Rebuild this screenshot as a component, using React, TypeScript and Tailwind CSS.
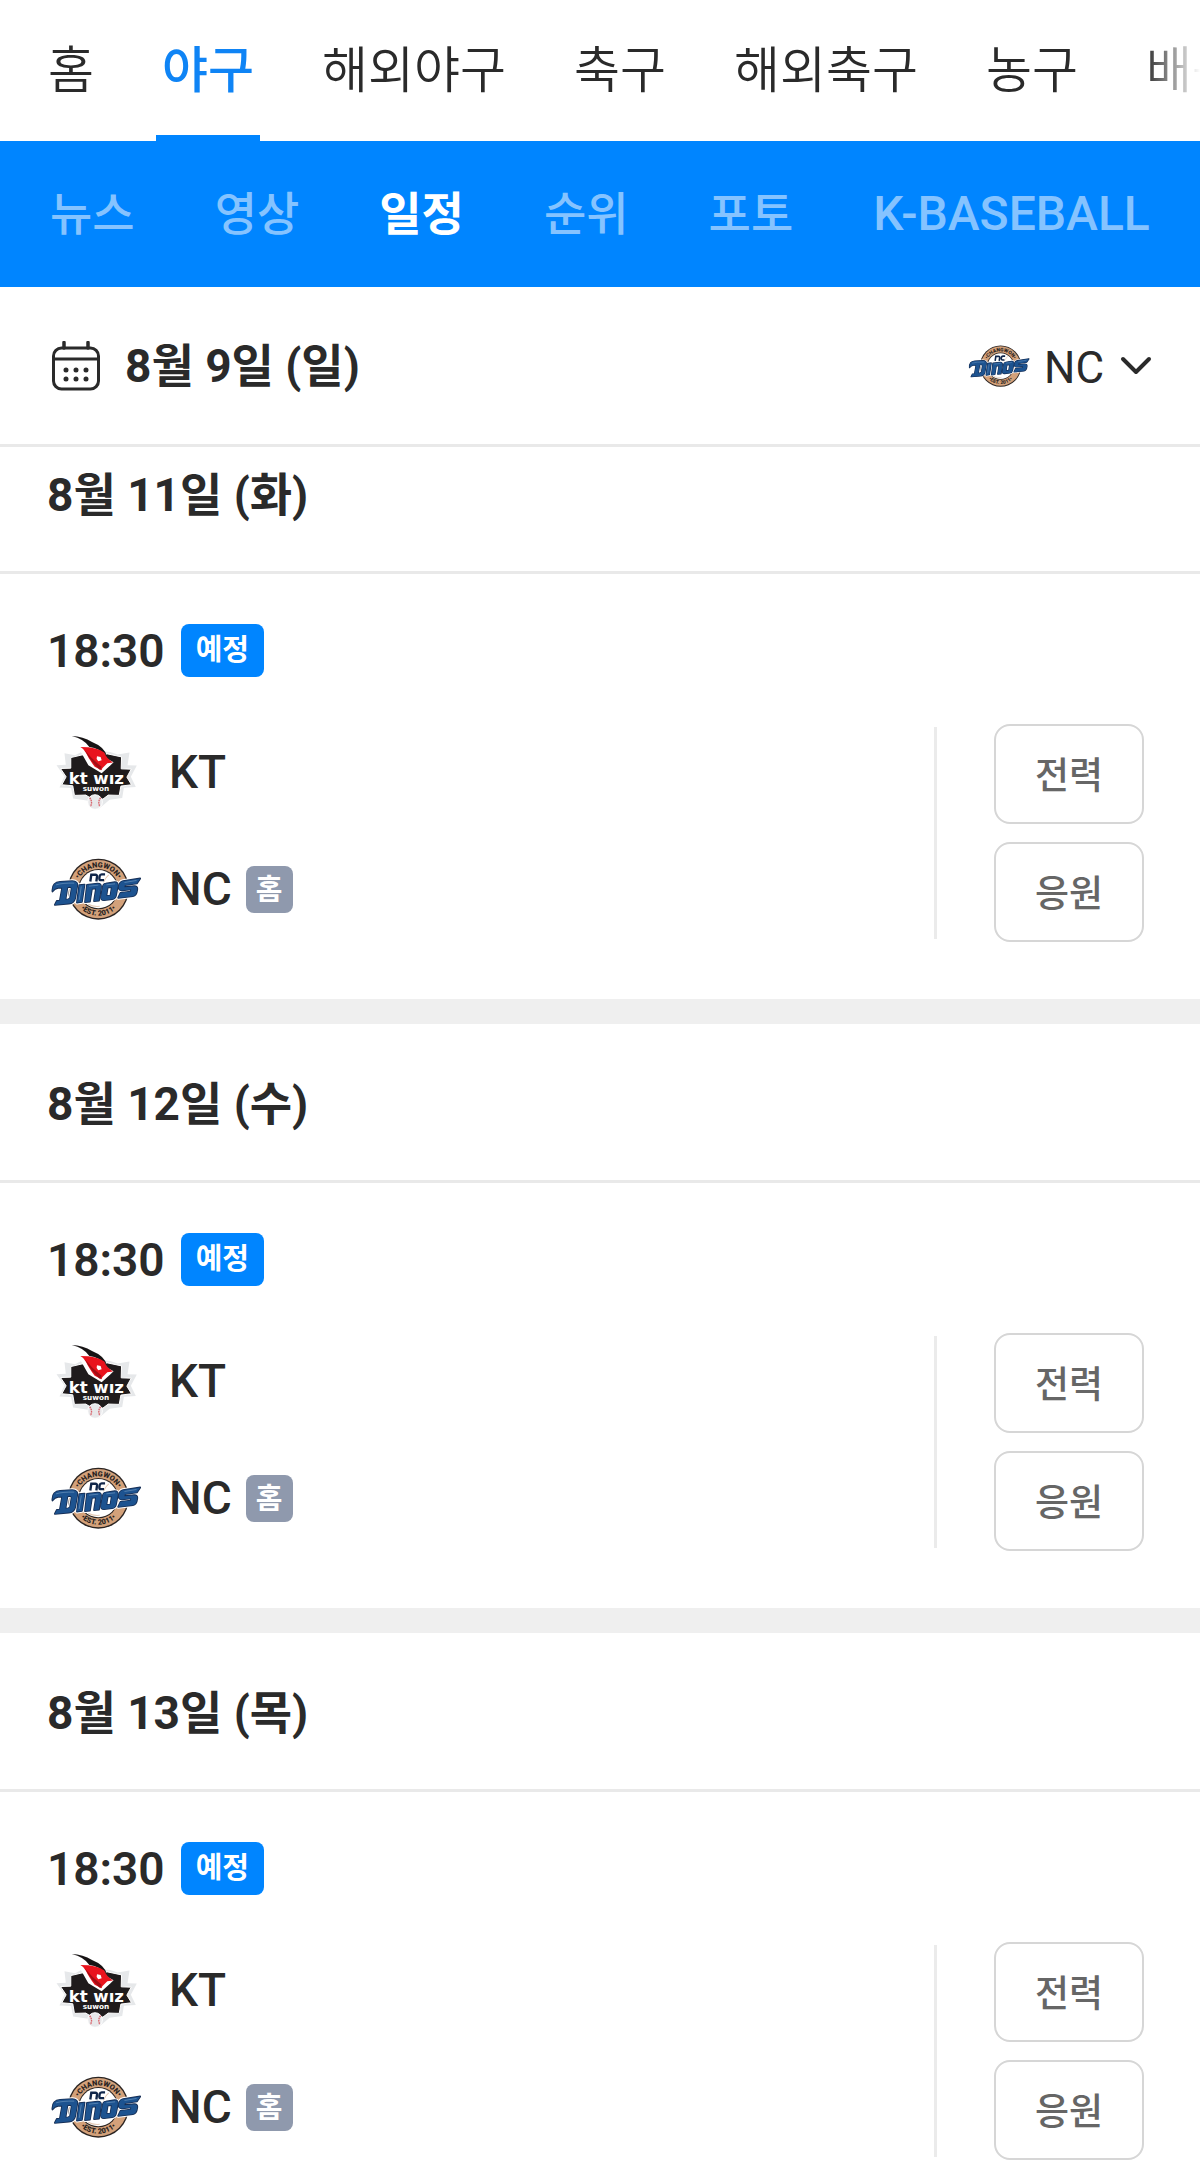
import { useState } from "react";

type Game = {
  id: string;
  date: string;
  time: string;
  status: string;
  away: string;
  home: string;
};

const SPORTS = ["홈", "야구", "해외야구", "축구", "해외축구", "농구", "배구"];
const MENUS = [
  { name: "뉴스", size: "text-[46px]" },
  { name: "영상", size: "text-[46px]" },
  { name: "일정", size: "text-[46px]" },
  { name: "순위", size: "text-[46px]" },
  { name: "포토", size: "text-[46px]" },
  { name: "K-BASEBALL", size: "text-[48px]" },
];
const TEAMS = ["NC", "KT"];

const GAMES: Game[] = [
  { id: "0811", date: "8월 11일 (화)", time: "18:30", status: "예정", away: "KT", home: "NC" },
  { id: "0812", date: "8월 12일 (수)", time: "18:30", status: "예정", away: "KT", home: "NC" },
  { id: "0813", date: "8월 13일 (목)", time: "18:30", status: "예정", away: "KT", home: "NC" },
];

// letter shapes of the slanted wordmark
const WORDMARK = [
  "M39 140Q37 113 62 111L98 109Q116 110 113 124L107 160Q103 175 88 176L46 180L52 168L61 167L68 129L56 129Q46 130 39 140ZM84 127L78 164L86 163Q91 162 92 157L96 132Q96 126 91 126Z",
  "M119 121l16-2-8 52-15 2z",
  "M142 120l32-4q12 0 10 13l-6 38-15 2 6-38-12 1-6 38-15 2z",
  "M198 116l27-4q11 0 9 13l-5 26q-2 11-12 12l-24 3q-11 0-9-12l5-27q1-10 9-11zM204 128l-4 25 12-1 4-25z",
  "M250 109l51-8-10 15-36 5-1 6 29-3q11 0 9 11-2 17-13 19l-44 5 7-15 31-4 1-6-28 3q-11-1-9-12 2-14 13-16z",
];

function DinosLogo({ className }: { className: string }) {
  return (
    <svg viewBox="35 40 268 185" className={className} role="img" aria-label="NC Dinos">
      <defs>
        <path id="dinos-top" d="M110 134A66 66 0 0 1 242 134" />
        <path id="dinos-bottom" d="M98 134A78 78 0 0 0 254 134" />
      </defs>
      <circle cx="176" cy="133" r="91" fill="#2a2422" />
      <circle cx="176" cy="133" r="87" fill="#d3a17a" />
      <circle cx="176" cy="133" r="60" fill="#2a2422" />
      <circle cx="176" cy="133" r="57" fill="#fff" />
      <path d="M207 90q-16 14-20 40M146 178q14 8 34 6" fill="none" stroke="#e3c9b4" strokeWidth="3" />
      <g fill="#2a2422" fontFamily="Roboto, sans-serif" fontWeight="900" textAnchor="middle">
        <text fontSize="22">
          <textPath href="#dinos-top" startOffset="50%">•CHANGWON•</textPath>
        </text>
        <text fontSize="22">
          <textPath href="#dinos-bottom" startOffset="50%">•EST. 2011•</textPath>
        </text>
      </g>
      <path
        d="M152 110l3-20h12q6 0 5 6l-2 14M196 89h-10q-5 0-6 5l-1 7q0 5 5 5h9"
        fill="none"
        stroke="#10264a"
        strokeWidth="7"
      />
      <g fill="#fff" stroke="#fff" strokeWidth="11" strokeLinejoin="round">
        {WORDMARK.map((d) => (
          <path key={d} d={d} />
        ))}
      </g>
      <g fill="#152c52" stroke="#152c52" strokeWidth="5" strokeLinejoin="round">
        {WORDMARK.map((d) => (
          <path key={d} d={d} />
        ))}
      </g>
      <g fill="#1d5390">
        {WORDMARK.map((d) => (
          <path key={d} d={d} />
        ))}
      </g>
      <path
        d="M50 120q20-6 54-5M125 125l-6 40M148 124l28-3M200 120l26-3M254 113l36-6"
        fill="none"
        stroke="#6f97c0"
        strokeWidth="2"
      />
    </svg>
  );
}

function WizLogo({ className }: { className: string }) {
  return (
    <svg viewBox="50 30 246 226" className={className} role="img" aria-label="KT wiz">
      <path
        d="M78 85l32 6 30-16 76 6 22 8 36-6-6 38 28 1-18 34 15 31-36 2-5 31-38 5-34 29-35-27-41-6-6-31-35-2 15-33-24-34 28-1z"
        fill="#e6e8ea"
      />
      <path
        d="M97 98l34-8 45 1 32-4 42 9-1 36 30 1-13 24 14 23-32 4-5 28-33-1-16 12H162l-20-12-34 1-5-29-33-3 13-24-17-25 31-1z"
        fill="#1f1b1c"
        stroke="#fff"
        strokeWidth="3"
      />
      <path d="M95 62Q118 65 130 86L150 121L190 145L216 122L226 112L204 100L180 70Z" fill="#fff" />
      <path d="M100 33Q134 34 161 51Q199 66 206 94Q184 70 153 66Q137 42 100 33Z" fill="#171415" />
      <path
        d="M126 66Q179 66 198 83Q203 99 224 113L207 115L192 130L190 136L169 126Q151 101 143 84Q138 72 126 66Z"
        fill="#e9131d"
      />
      <path d="M139 76Q160 102 190 126L186 136Q160 115 139 76Z" fill="#a30d15" />
      <path d="M176 94l11 2 3 10-10 3-5-7z" fill="#fff" />
      <circle cx="170" cy="232" r="22" fill="#e8e8ea" stroke="#fff" strokeWidth="3" />
      <path
        d="M154 219q10 13 2 27M187 219q-10 13-2 27"
        fill="none"
        stroke="#d8636b"
        strokeWidth="4"
        strokeDasharray="5 2"
      />
      <g fill="#fff" textAnchor="middle">
        <text x="174" y="177" fontSize="50" fontWeight="700" fontFamily="DejaVu Sans, sans-serif">
          kt wız
        </text>
        <text x="173" y="199" fontSize="22" fontWeight="700" fontFamily="DejaVu Sans, sans-serif">
          suwon
        </text>
      </g>
    </svg>
  );
}

function CalendarIcon() {
  return (
    <svg viewBox="0 0 48 50" className="h-[50px] w-12" fill="none" stroke="#2a2a2a" aria-hidden="true">
      <rect x="1.5" y="7" width="45" height="41" rx="8" strokeWidth="3" />
      <path d="M1.5 18h45" strokeWidth="3" />
      <path d="M12 1.5V7M36 1.5V7" strokeWidth="3.5" strokeLinecap="round" />
      <path d="M14 29h.01M24 29h.01M34 29h.01M14 38h.01M24 38h.01M34 38h.01" strokeWidth="5" strokeLinecap="round" />
    </svg>
  );
}

function TeamRow({ name, isHome = false }: { name: string; isHome?: boolean }) {
  return (
    <div className="flex h-24 items-center">
      <div className="flex w-[98px] justify-center">
        {name === "NC" ? (
          <DinosLogo className="h-[62px] w-[90px]" />
        ) : (
          <WizLogo className="h-[75px] w-[82px]" />
        )}
      </div>
      <span className="ml-6 text-[46px] font-medium leading-none">{name}</span>
      {isHome && (
        <span className="ml-[14px] flex size-[47px] items-center justify-center rounded-lg bg-[#8f99ad] pt-0.5 text-[29px] font-bold leading-none text-white">
          홈
        </span>
      )}
    </div>
  );
}

function GameSection({ game }: { game: Game }) {
  return (
    <section className="border-b-[25px] border-[#efefef]">
      <h2 className="flex h-[159px] items-center border-b-[3px] border-[#e9e9e9] px-[47px] pt-1 text-[46px] font-bold leading-none">
        {game.date}
      </h2>
      <div className="pb-[57px] pl-[47px] pr-14 pt-[50px]">
        <div className="flex items-center gap-4">
          <time className="text-[46px] font-semibold leading-none">{game.time}</time>
          <span className="flex h-[53px] items-center rounded-lg bg-[#0085ff] px-[15px] text-[29px] font-bold leading-none text-white">
            {game.status}
          </span>
        </div>
        <div className="mt-[47px] flex items-stretch">
          <div className="flex grow flex-col gap-[21px]">
            <TeamRow name={game.away} />
            <TeamRow name={game.home} isHome />
          </div>
          <div className="my-[3px] w-[3px] bg-[#ebebeb]" />
          <div className="ml-[57px] flex w-[150px] flex-col gap-[18px]">
            {["전력", "응원"].map((label) => (
              <button
                key={label}
                type="button"
                className="h-[100px] rounded-2xl border-2 border-[#d6d6d6] pt-1 text-[37px] font-medium leading-none text-[#666]"
              >
                {label}
              </button>
            ))}
          </div>
        </div>
      </div>
    </section>
  );
}

export default function App() {
  const [sport, setSport] = useState("야구");
  const [menu, setMenu] = useState("일정");
  const [team, setTeam] = useState("NC");

  return (
    <div className="h-screen overflow-hidden bg-white font-['Roboto','Noto_Sans_CJK_KR',sans-serif] text-[#2a2a2a]">
      <header className="relative z-10 bg-white">
        <nav className="relative flex h-[141px] gap-14 overflow-hidden pl-[42px]" aria-label="종목">
          {SPORTS.map((name) => (
            <button
              key={name}
              type="button"
              onClick={() => setSport(name)}
              className={
                name === sport
                  ? "shrink-0 border-b-[6px] border-[#0085ff] px-[6px] pt-[6px] text-[50px] font-medium leading-none text-[#0f84f5]"
                  : "shrink-0 border-b-[6px] border-transparent px-[6px] pt-[6px] text-[50px] font-[350] leading-none"
              }
            >
              {name}
            </button>
          ))}
          <div className="pointer-events-none absolute inset-y-0 right-0 w-14 bg-linear-to-r from-transparent to-white" />
        </nav>

        <nav className="flex h-[146px] items-center gap-20 overflow-hidden bg-[#0085ff] pl-[50px]" aria-label="야구 메뉴">
          {MENUS.map(({ name, size }) => (
            <a
              key={name}
              href="#"
              onClick={() => setMenu(name)}
              className={`shrink-0 leading-none ${size} ${
                name === menu ? "font-bold text-white" : "font-medium text-[#85c3ff]"
              }`}
            >
              {name}
            </a>
          ))}
        </nav>

        <div className="flex h-40 items-center justify-between border-b-[3px] border-[#e9e9e9] pl-[52px] pr-12">
          <button type="button" className="flex items-center gap-[25px] text-[46px] font-bold leading-none">
            <CalendarIcon />
            8월 9일 (일)
          </button>
          <label className="flex items-center">
            <DinosLogo className="h-[42px] w-[62px]" />
            <select
              aria-label="팀 선택"
              value={team}
              onChange={(event) => setTeam(event.target.value)}
              className="ml-[14px] w-[76px] appearance-none bg-transparent pt-1 text-[44px] leading-none"
            >
              {TEAMS.map((name) => (
                <option key={name}>{name}</option>
              ))}
            </select>
            <svg viewBox="0 0 32 20" className="h-5 w-8" fill="none" aria-hidden="true">
              <path d="M3 3l13 13L29 3" stroke="#2a2a2a" strokeWidth="4" strokeLinecap="round" strokeLinejoin="round" />
            </svg>
          </label>
        </div>
      </header>

      {/* the list is scrolled slightly under the header */}
      <main className="-mt-8">
        {GAMES.map((game) => (
          <GameSection key={game.id} game={game} />
        ))}
      </main>
    </div>
  );
}
